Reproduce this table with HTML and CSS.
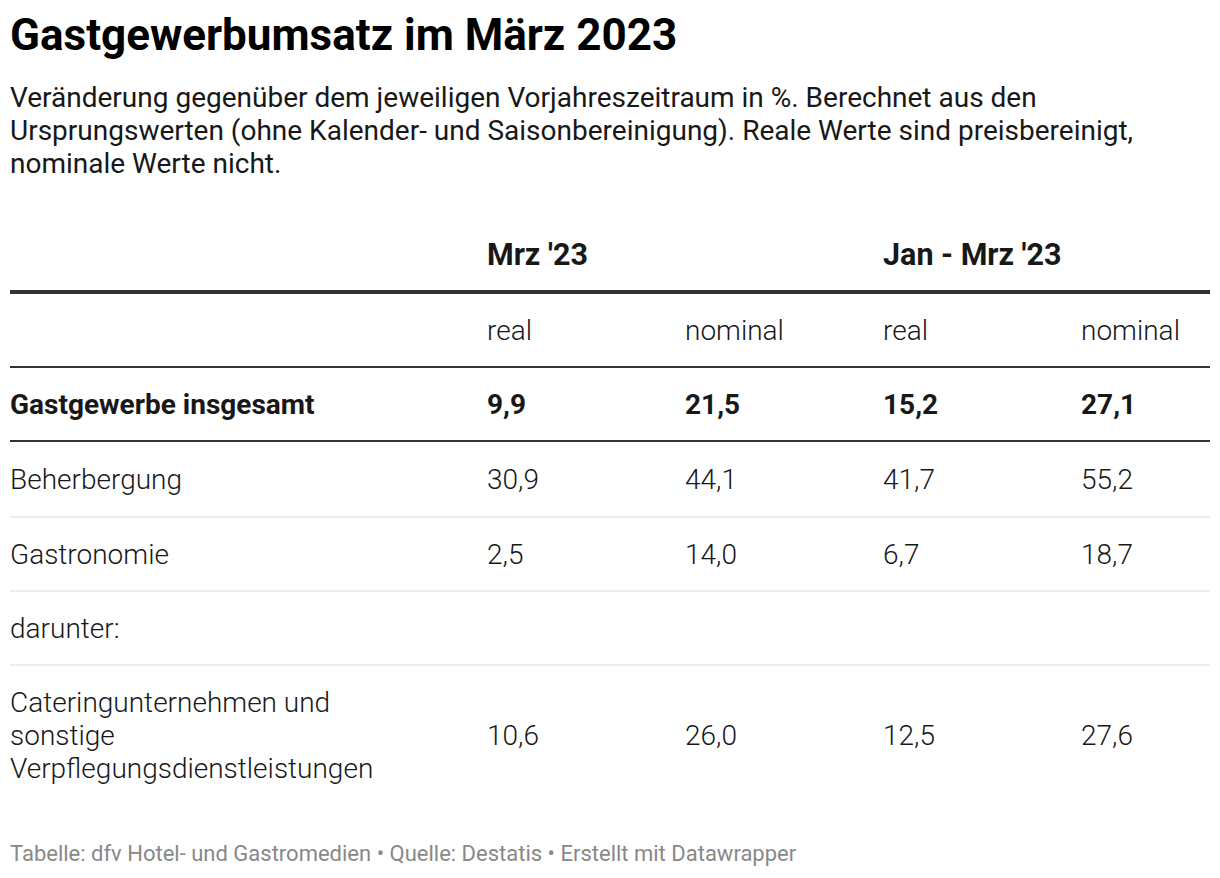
FILE: index.html
```html
<!DOCTYPE html>
<html lang="de">
<head>
<meta charset="utf-8">
<link rel="stylesheet" href="styles.css">
</head>
<body>
<div class="chart">
  <h1 class="title">Gastgewerbumsatz im März 2023</h1>
  <p class="desc">Veränderung gegenüber dem jeweiligen Vorjahreszeitraum in %. Berechnet aus den Ursprungswerten (ohne Kalender- und Saisonbereinigung). Reale Werte sind preisbereinigt, nominale Werte nicht.</p>
  <table class="tbl">
    <colgroup>
      <col class="c-label">
      <col class="c-num">
      <col class="c-num">
      <col class="c-num">
      <col class="c-last">
    </colgroup>
    <thead>
      <tr class="group-row">
        <th></th>
        <th colspan="2">Mrz '23</th>
        <th colspan="2">Jan - Mrz '23</th>
      </tr>
      <tr class="sub-row">
        <th></th>
        <th>real</th>
        <th>nominal</th>
        <th>real</th>
        <th>nominal</th>
      </tr>
    </thead>
    <tbody>
      <tr class="total-row">
        <td>Gastgewerbe insgesamt</td>
        <td>9,9</td>
        <td>21,5</td>
        <td>15,2</td>
        <td>27,1</td>
      </tr>
      <tr class="first-body">
        <td>Beherbergung</td>
        <td>30,9</td>
        <td>44,1</td>
        <td>41,7</td>
        <td>55,2</td>
      </tr>
      <tr>
        <td>Gastronomie</td>
        <td>2,5</td>
        <td>14,0</td>
        <td>6,7</td>
        <td>18,7</td>
      </tr>
      <tr>
        <td>darunter:</td>
        <td></td>
        <td></td>
        <td></td>
        <td></td>
      </tr>
      <tr class="last-row">
        <td class="label-wrap">Cateringunternehmen und sonstige Verpflegungsdienstleistungen</td>
        <td>10,6</td>
        <td>26,0</td>
        <td>12,5</td>
        <td>27,6</td>
      </tr>
    </tbody>
  </table>
  <p class="footer">Tabelle: dfv Hotel- und Gastromedien • Quelle: Destatis • Erstellt mit Datawrapper</p>
</div>
</body>
</html>
```

FILE: styles.css
```css
html, body {
  margin: 0;
  padding: 0;
  background: #ffffff;
}

body {
  font-family: Roboto, "Liberation Sans", sans-serif;
  color: #181818;
}

.chart {
  padding: 10px 10px 0 10px;
}

.title {
  margin: 0;
  font-size: 44px;
  font-weight: 700;
  line-height: 50px;
  color: #000;
}

.desc {
  margin: 21px 0 0 0;
  font-size: 28px;
  line-height: 33px;
  font-weight: 400;
  color: #181818;
}

.tbl {
  margin-top: 40px;
  width: 1200px;
  border-collapse: separate;
  border-spacing: 0;
  table-layout: fixed;
  font-size: 28px;
  line-height: 33px;
}

.c-label { width: 477px; }
.c-num { width: 198px; }
.c-last { width: 129px; }

.tbl th,
.tbl td {
  text-align: left;
  vertical-align: middle;
  padding: 20px 0 19px 0;
  color: #181818;
}

.group-row th {
  font-size: 30.5px;
  font-weight: 700;
  padding: 18px 0 19px 0;
  border-bottom: 4px solid #333;
}

.sub-row th {
  font-weight: 300;
  border-bottom: 2px solid #333;
}

.tbl td {
  font-weight: 300;
  border-bottom: 2px solid #ececec;
}

.total-row td {
  font-weight: 700;
  border-bottom: 2px solid #333;
}

.first-body td {
  padding-top: 21px;
  padding-bottom: 20px;
}

.last-row td {
  border-bottom: none;
  padding-top: 20px;
  padding-bottom: 20px;
}

.tbl td.label-wrap {
  padding-right: 90px;
}

.footer {
  margin: 34px 0 0 0;
  font-size: 22px;
  line-height: 30px;
  color: #888888;
}
```
